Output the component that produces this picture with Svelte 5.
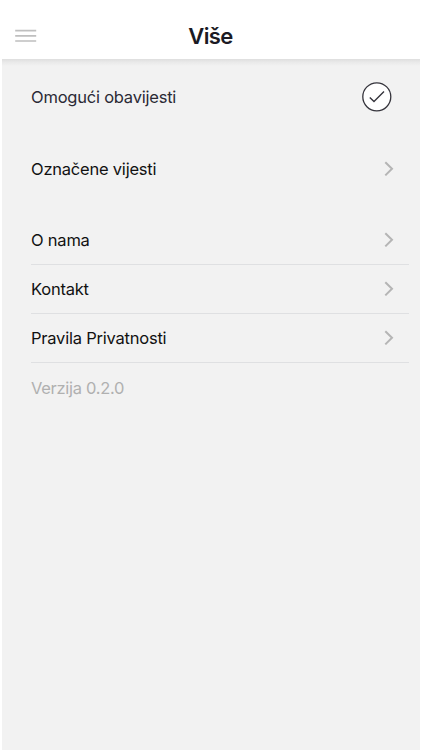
<script>
    let notifications = $state(true);

    const groups = [
        ["Označene vijesti"],
        ["O nama", "Kontakt", "Pravila Privatnosti"]
    ];

    function toggle() {
        notifications = !notifications;
    }
</script>

<div class="screen">
    <header>
        <button class="menu" aria-label="Izbornik">
            <svg width="22" height="14" viewBox="0 0 22 14">
                <path d="M0.2 1.6H21.2M0.2 6.8H21.2M0.2 12H21.2" stroke="#bfbfbf" stroke-width="1.7" />
            </svg>
        </button>
        <h1>Više</h1>
    </header>

    <main>
        <div class="row toggle">
            <span class="label">Omogući obavijesti</span>
            <button class="check" aria-label="Omogući obavijesti" aria-pressed={notifications} onclick={toggle}>
                <svg width="30" height="30" viewBox="0 0 30 30" fill="none" stroke="#35343c">
                    <circle cx="14.8" cy="14.8" r="14" fill="#fff" stroke-width="1.3" />
                    {#if notifications}
                        <path d="M7.8 15.4L12 19.6L22 9.6" stroke-width="1.4" />
                    {/if}
                </svg>
            </button>
        </div>

        {#each groups as group}
            <div class="group" class:lined={group.length > 1}>
                {#each group as item}
                    <div class="row">
                        <span class="label">{item}</span>
                        <svg class="chevron" width="10" height="16" viewBox="0 0 10 16" fill="none">
                            <path d="M1.3 1.2L8 7.8L1.3 14.4" stroke="#b5b5b5" stroke-width="2" />
                        </svg>
                    </div>
                {/each}
            </div>
        {/each}

        <p class="version">Verzija 0.2.0</p>
    </main>
</div>

<style>
    :global(body) {
        background: #fff;
    }

    .screen {
        display: flex;
        flex-direction: column;
        box-sizing: border-box;
        height: 750px;
        padding: 0 2px;
        overflow: hidden;
        font-family: Inter, Roboto, sans-serif;
        font-size: 16.5px;
        letter-spacing: -0.22px;
        color: #111;
    }

    header {
        display: grid;
        grid-template-columns: 60px 1fr 60px;
        align-items: center;
        box-sizing: border-box;
        height: 59px;
        padding-top: 13px;
        background: #fff;
    }

    h1 {
        margin: 0;
        padding-right: 1px;
        text-align: center;
        font-size: 22px;
        font-weight: 600;
        letter-spacing: -0.6px;
        color: #1b1a24;
    }

    button {
        display: flex;
        padding: 0;
        border: 0;
        background: none;
    }

    .menu {
        margin-left: 13px;
    }

    main {
        flex: 1;
        padding: 13px 11px 0 29px;
        background: linear-gradient(#dedede, #e9e9e9 3px, #f2f2f2 7px);
    }

    .row {
        display: flex;
        align-items: center;
        justify-content: space-between;
        box-sizing: border-box;
        height: 49px;
        padding-right: 15px;
    }

    .toggle {
        padding-right: 17px;
        color: #2b2a35;
    }

    .group {
        margin-top: 23px;
    }

    .lined .row {
        border-bottom: 1px solid #dfe0e2;
    }

    .version {
        display: flex;
        align-items: center;
        height: 49px;
        margin: 0;
        letter-spacing: -0.3px;
        color: #b0b0b0;
    }
</style>
